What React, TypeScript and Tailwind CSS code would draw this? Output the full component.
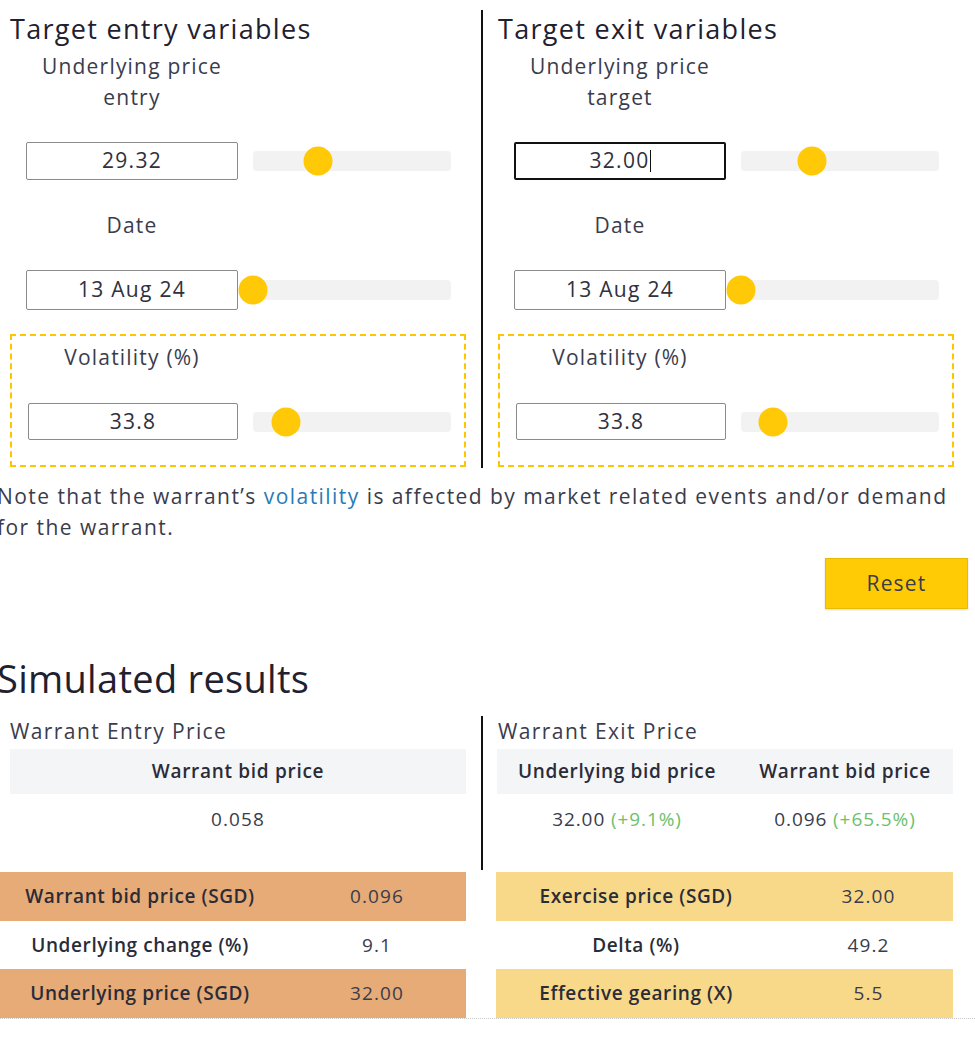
import React from "react";

const FONT = "font-['Open_Sans','Noto_Sans',sans-serif]";

interface SliderFieldProps {
  value: string;
  thumb: number;
  focused?: boolean;
  inputClass?: string;
}

function SliderField({ value, thumb, focused, inputClass }: SliderFieldProps) {
  return (
    <div className="flex items-center">
      <div
        className={`flex items-center justify-center rounded-[2px] bg-white text-[21px] tracking-[1.3px] text-[#2f3140] ${
          focused ? "border-2 border-[#111]" : "border border-[#8a8a8a]"
        } ${inputClass ?? "h-[38px] w-[212px]"}`}
      >
        <span>{value}</span>
        {focused && <span className="inline-block h-[22px] w-[1px] bg-[#111]" />}
      </div>
      <div className="relative ml-[15px] h-[20px] w-[198px] rounded-[4px] bg-[#f2f2f2]">
        <div
          className="absolute top-1/2 h-[29px] w-[29px] -translate-x-1/2 -translate-y-1/2 rounded-full bg-[#ffc907]"
          style={{ left: thumb }}
        />
      </div>
    </div>
  );
}

interface VariablesColumnProps {
  title: string;
  labelSecond: string;
  price: string;
  priceThumb: number;
  dateThumb: number;
  volThumb: number;
  focused?: boolean;
  className: string;
}

const LABEL = "w-[212px] text-center text-[21px] leading-[31px] tracking-[1.2px] text-[#3a3c4c]";

function VariablesColumn({
  title,
  labelSecond,
  price,
  priceThumb,
  dateThumb,
  volThumb,
  focused,
  className,
}: VariablesColumnProps) {
  return (
    <div className={className}>
      <h2 className="mt-[3px] text-[27px] leading-[32px] tracking-[1.3px] text-[#1f2130]">{title}</h2>

      {/* Underlying price */}
      <div className={`ml-[16px] mt-[6px] ${LABEL}`}>
        Underlying price
        <br />
        {labelSecond}
      </div>
      <div className="ml-[16px] mt-[29px]">
        <SliderField value={price} thumb={priceThumb} focused={focused} />
      </div>

      {/* Date */}
      <div className={`ml-[16px] mt-[30px] ${LABEL}`}>Date</div>
      <div className="ml-[16px] mt-[29px]">
        <SliderField value="13 Aug 24" thumb={dateThumb} inputClass="h-[40px] w-[212px]" />
      </div>

      {/* Volatility */}
      <div className="mt-[24px] h-[133px] w-[456px] border-2 border-dashed border-[#ffc600] pt-[6px]">
        <div className={`ml-[14px] ${LABEL}`}>Volatility (%)</div>
        <div className="ml-[16px] mt-[30px]">
          <SliderField value="33.8" thumb={volThumb} inputClass="h-[37px] w-[210px]" />
        </div>
      </div>
    </div>
  );
}

function ResultRow({ label, value, bg }: { label: string; value: string; bg: string }) {
  return (
    <div className={`grid h-[48.5px] grid-cols-[280px_1fr] items-center ${bg}`}>
      <div className="text-center text-[19px] font-semibold tracking-[0.6px] text-[#2a2c38]">{label}</div>
      <div className="pl-[8px] text-center text-[19px] tracking-[1.1px] text-[#3a3c4c]">{value}</div>
    </div>
  );
}

export default function App() {
  return (
    <div className={`w-[975px] overflow-hidden bg-white ${FONT}`}>
      {/* Target variables */}
      <div className="mt-[10px] flex">
        <VariablesColumn
          title="Target entry variables"
          labelSecond="entry"
          price="29.32"
          priceThumb={65}
          dateThumb={0}
          volThumb={33}
          className="h-[458px] w-[483px] border-r-2 border-[#111] pl-[10px]"
        />
        <VariablesColumn
          title="Target exit variables"
          labelSecond="target"
          price="32.00"
          priceThumb={71}
          dateThumb={0}
          volThumb={32}
          focused
          className="h-[458px] flex-1 pl-[15px]"
        />
      </div>

      {/* Note */}
      <p className="-ml-[3px] mt-[13px] text-[21px] leading-[31px] tracking-[1.45px] text-[#3a3c4c]">
        Note that the warrant’s <span className="text-[#2a7ab8]">volatility</span> is affected by market
        related events and/or demand
        <br />
        for the warrant.
      </p>

      <div className="mt-[15px] flex justify-end pr-[7px]">
        <button className="h-[51px] w-[143px] border border-[#e8bb00] bg-[#ffcb05] text-[21px] tracking-[1.2px] text-[#3a3c4c] shadow-[0_1px_2px_rgba(0,0,0,0.15)]">
          Reset
        </button>
      </div>

      {/* Simulated results */}
      <h2 className="-ml-[3px] mt-[47px] text-[38px] leading-[44px] tracking-[0.3px] text-[#1f2130]">
        Simulated results
      </h2>

      <div className="mt-[16px] flex">
        <div className="h-[154px] w-[483px] border-r-2 border-[#111] pl-[10px]">
          <div className="text-[21px] leading-[30px] tracking-[1.4px] text-[#3a3c4c]">Warrant Entry Price</div>
          <div className="mt-[3px] w-[456px]">
            <div className="flex h-[45px] items-center justify-center bg-[#f4f5f7] text-[19px] font-semibold tracking-[0.7px] text-[#2a2c38]">
              Warrant bid price
            </div>
            <div className="flex h-[50px] items-center justify-center text-[19px] tracking-[1.1px] text-[#3a3c4c]">
              0.058
            </div>
          </div>
        </div>
        <div className="h-[154px] flex-1 pl-[14px]">
          <div className="pl-[1px] text-[21px] leading-[30px] tracking-[1.4px] text-[#3a3c4c]">Warrant Exit Price</div>
          <div className="mt-[3px] w-[456px]">
            <div className="grid h-[45px] grid-cols-[240px_1fr] items-center bg-[#f4f5f7] text-center text-[19px] font-semibold tracking-[0.65px] text-[#2a2c38]">
              <div>Underlying bid price</div>
              <div>Warrant bid price</div>
            </div>
            <div className="grid h-[50px] grid-cols-[240px_1fr] items-center text-center text-[19px] tracking-[0.9px] text-[#3a3c4c]">
              <div>
                32.00 <span className="text-[#6cc16c]">(+9.1%)</span>
              </div>
              <div>
                0.096 <span className="text-[#6cc16c]">(+65.5%)</span>
              </div>
            </div>
          </div>
        </div>
      </div>

      {/* Summary tables */}
      <div className="mt-[2px] flex border-b border-dotted border-[#c8c8c8]">
        <div className="w-[466px]">
          <ResultRow label="Warrant bid price (SGD)" value="0.096" bg="bg-[#e6ab76]" />
          <ResultRow label="Underlying change (%)" value="9.1" bg="bg-white" />
          <ResultRow label="Underlying price (SGD)" value="32.00" bg="bg-[#e6ab76]" />
        </div>
        <div className="ml-[30px] w-[457px]">
          <ResultRow label="Exercise price (SGD)" value="32.00" bg="bg-[#f8d98a]" />
          <ResultRow label="Delta (%)" value="49.2" bg="bg-white" />
          <ResultRow label="Effective gearing (X)" value="5.5" bg="bg-[#f8d98a]" />
        </div>
      </div>
    </div>
  );
}
